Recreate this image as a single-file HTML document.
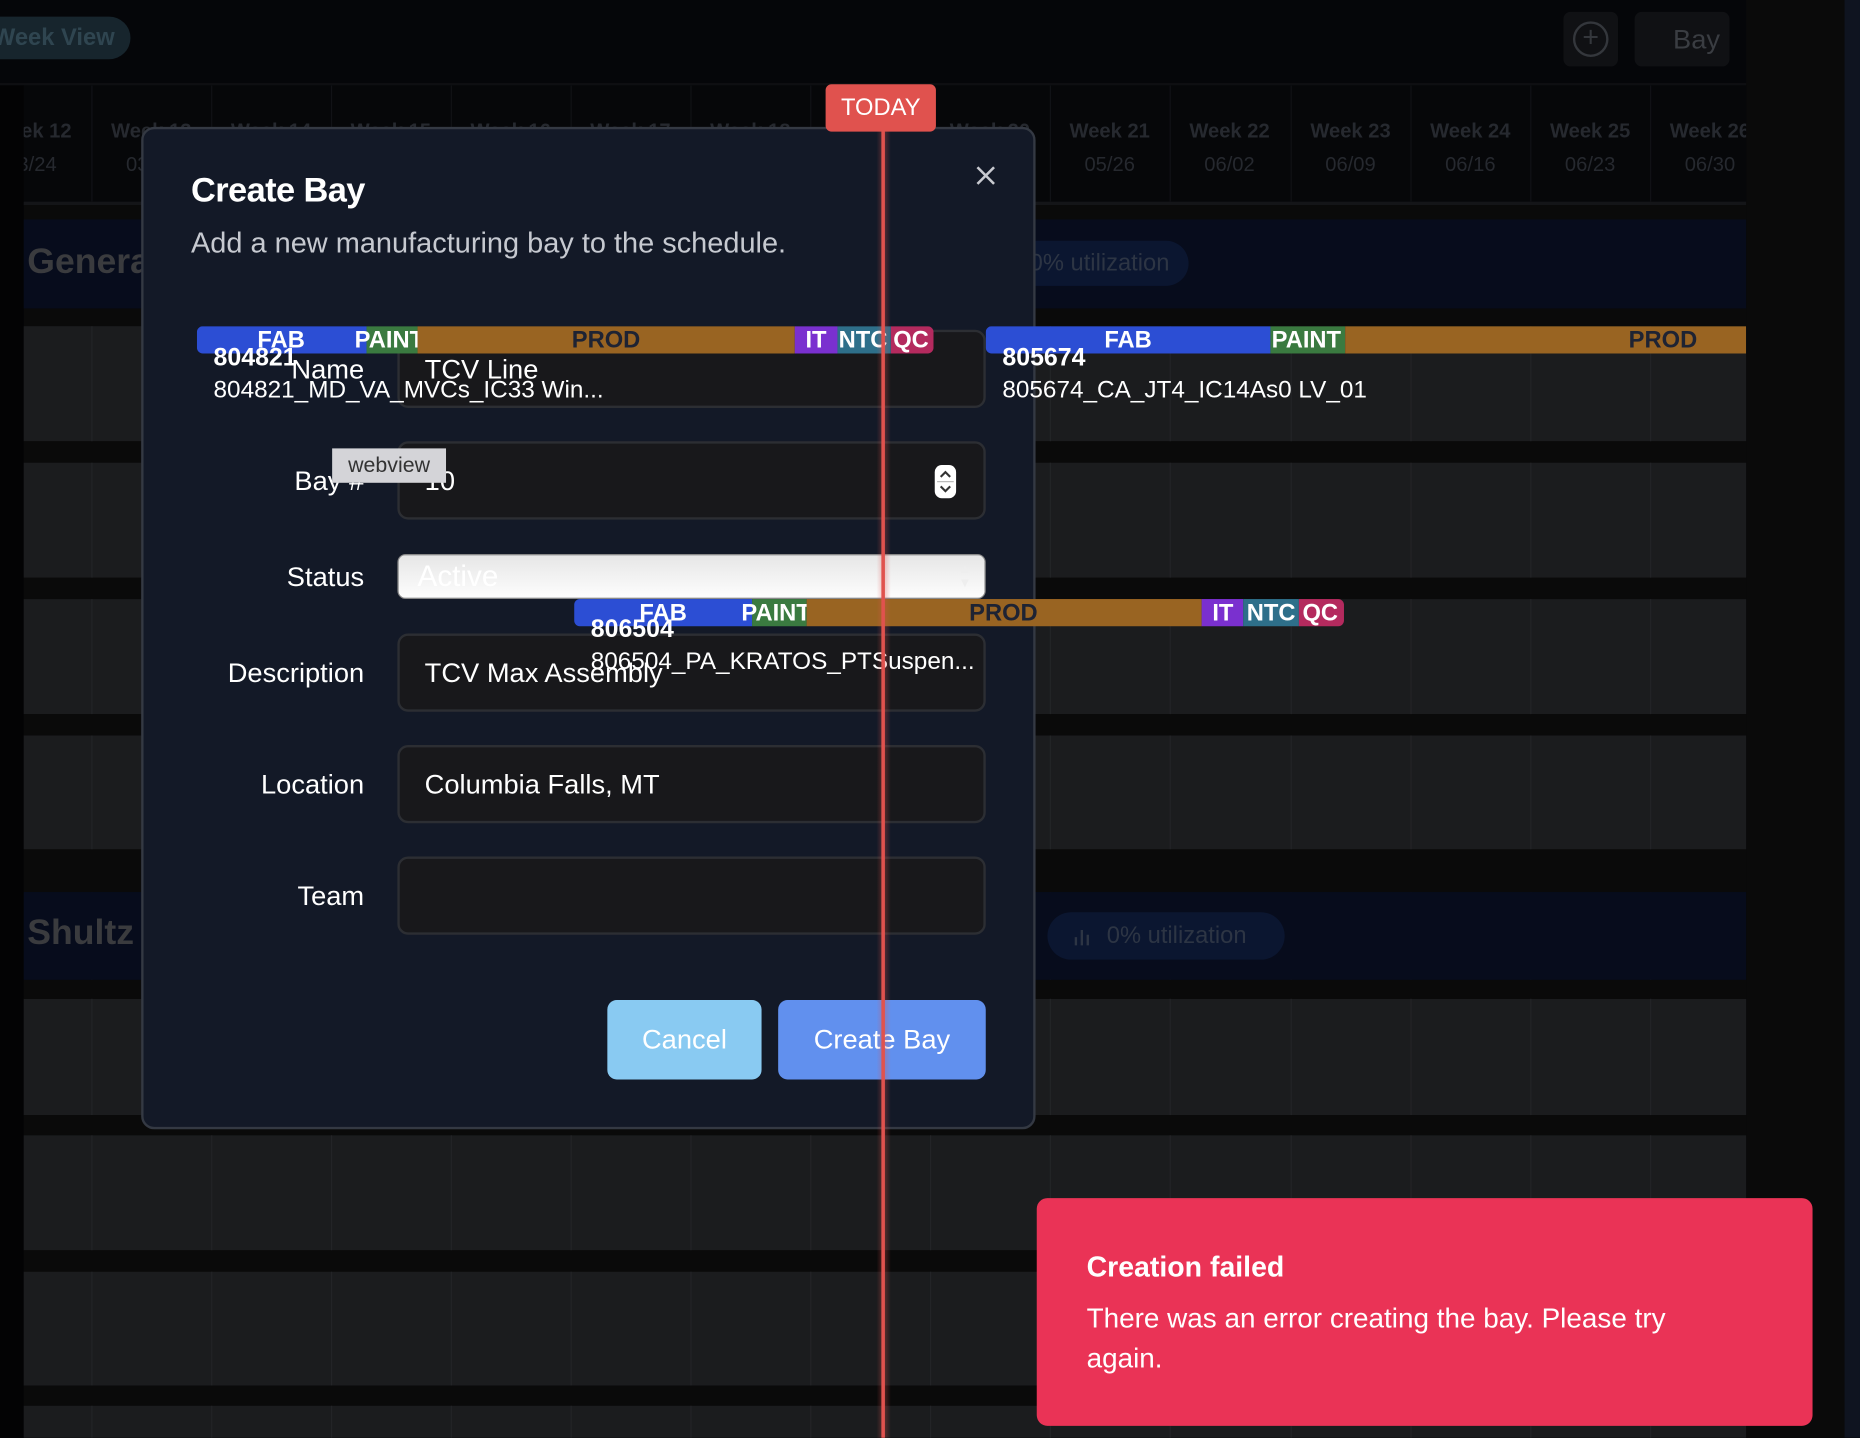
<!DOCTYPE html>
<html><head><meta charset="utf-8"><style>
*{box-sizing:border-box;margin:0;padding:0}
html,body{width:1860px;height:1438px;overflow:hidden;background:#050609;font-family:"Liberation Sans",sans-serif}
#s{position:absolute;left:0;top:0;width:1568px;height:1212px;transform:scale(1.18622);transform-origin:0 0;overflow:hidden;background:#050609}
.a{position:absolute}
.wk{position:absolute;top:100px;width:101px;text-align:center;color:#26292f;font-size:17px;font-weight:bold;line-height:22px}
.wk span{display:block;font-weight:normal;margin-top:6px}
.row{position:absolute;left:20px;width:1452px;background:#1b1c1e}
.vl{position:absolute;top:0;bottom:0;width:1px;background:#232427}
.lbl{position:absolute;right:1261px;color:#fff;font-size:23px;text-align:right}
.inp{position:absolute;left:335px;width:496px;height:66px;background:#18181b;border:2px solid #2c2e33;border-radius:9px;color:#fff;font-size:23px;padding-left:21px;line-height:62px}
.seg{position:absolute;top:0;height:23px}
.sl{position:absolute;font-size:20px;font-weight:bold;line-height:24px;color:#fff;white-space:nowrap}
.bt{position:absolute;color:#fff;font-weight:bold;font-size:21px;line-height:22px;white-space:nowrap}
.bs{position:absolute;color:#fff;font-size:20.5px;white-space:nowrap}
</style></head><body><div id="s">
<div class="a" style="left:1472px;top:0;width:96px;height:1212px;background:#0a0a0a"></div>
<div class="a" style="left:1555px;top:0;width:13px;height:1212px;background:#0f1420"></div>
<div class="a" style="left:-30px;top:14px;width:140px;height:36px;border-radius:18px;background:#17252d;color:#2f4550;font-size:20px;font-weight:bold;line-height:36px;padding-left:24px">Week View</div>
<div class="a" style="left:1318px;top:10px;width:46px;height:46px;border-radius:6px;background:#101114"></div>
<div class="a" style="left:1326px;top:18px;width:30px;height:30px;border-radius:50%;border:2.5px solid #34373c;color:#34373c;text-align:center;font-size:24px;line-height:24px">+</div>
<div class="a" style="left:1378px;top:10px;width:80px;height:46px;border-radius:6px;background:#101114;color:#3a3d42;font-size:23px;line-height:46px;text-align:right;padding-right:8px">Bay</div>
<div class="a" style="left:0;top:70px;width:1472px;height:2px;background:#0e0f12"></div>
<div class="a" style="left:0;top:72px;width:20px;height:1140px;background:#030304"></div>
<div class="a" style="left:20px;top:72px;width:1452px;height:98px;background:#060709"></div>
<div class="a" style="left:20px;top:170px;width:1452px;height:3px;background:#141518"></div>
<div class="a" style="left:20px;top:173px;width:1452px;height:1039px;background:#0a0a0a"></div>
<div class="a" style="left:20px;top:72px;width:1452px;height:98px;overflow:hidden">
<div class="vl" style="left:57px;background:#111216"></div><div class="vl" style="left:158px;background:#111216"></div><div class="vl" style="left:259px;background:#111216"></div><div class="vl" style="left:360px;background:#111216"></div><div class="vl" style="left:461px;background:#111216"></div><div class="vl" style="left:562px;background:#111216"></div><div class="vl" style="left:663px;background:#111216"></div><div class="vl" style="left:764px;background:#111216"></div><div class="vl" style="left:865px;background:#111216"></div><div class="vl" style="left:966px;background:#111216"></div><div class="vl" style="left:1068px;background:#111216"></div><div class="vl" style="left:1169px;background:#111216"></div><div class="vl" style="left:1270px;background:#111216"></div><div class="vl" style="left:1371px;background:#111216"></div>
<div class="wk" style="left:-44px;top:28px">Week 12<span>03/24</span></div>
<div class="wk" style="left:57px;top:28px">Week 13<span>03/31</span></div>
<div class="wk" style="left:158px;top:28px">Week 14<span>04/07</span></div>
<div class="wk" style="left:259px;top:28px">Week 15<span>04/14</span></div>
<div class="wk" style="left:360px;top:28px">Week 16<span>04/21</span></div>
<div class="wk" style="left:461px;top:28px">Week 17<span>04/28</span></div>
<div class="wk" style="left:562px;top:28px">Week 18<span>05/05</span></div>
<div class="wk" style="left:663px;top:28px">Week 19<span>05/12</span></div>
<div class="wk" style="left:764px;top:28px">Week 20<span>05/19</span></div>
<div class="wk" style="left:865px;top:28px">Week 21<span>05/26</span></div>
<div class="wk" style="left:966px;top:28px">Week 22<span>06/02</span></div>
<div class="wk" style="left:1068px;top:28px">Week 23<span>06/09</span></div>
<div class="wk" style="left:1169px;top:28px">Week 24<span>06/16</span></div>
<div class="wk" style="left:1270px;top:28px">Week 25<span>06/23</span></div>
<div class="wk" style="left:1371px;top:28px">Week 26<span>06/30</span></div>
</div>
<div class="row" style="top:275px;height:97px"></div>
<div class="row" style="top:390px;height:97px"></div>
<div class="row" style="top:505px;height:97px"></div>
<div class="row" style="top:620px;height:96px"></div>
<div class="row" style="top:842px;height:98px"></div>
<div class="row" style="top:957px;height:97px"></div>
<div class="row" style="top:1072px;height:96px"></div>
<div class="row" style="top:1185px;height:40px"></div>
<div class="a" style="left:20px;top:275px;width:1452px;height:940px">
<div class="vl" style="left:57px"></div><div class="vl" style="left:158px"></div><div class="vl" style="left:259px"></div><div class="vl" style="left:360px"></div><div class="vl" style="left:461px"></div><div class="vl" style="left:562px"></div><div class="vl" style="left:663px"></div><div class="vl" style="left:764px"></div><div class="vl" style="left:865px"></div><div class="vl" style="left:966px"></div><div class="vl" style="left:1068px"></div><div class="vl" style="left:1169px"></div><div class="vl" style="left:1270px"></div><div class="vl" style="left:1371px"></div>
</div>
<div class="a" style="left:20px;top:372px;width:1452px;height:18px;background:#0a0a0a"></div>
<div class="a" style="left:20px;top:487px;width:1452px;height:18px;background:#0a0a0a"></div>
<div class="a" style="left:20px;top:602px;width:1452px;height:18px;background:#0a0a0a"></div>
<div class="a" style="left:20px;top:716px;width:1452px;height:36px;background:#0a0a0a"></div>
<div class="a" style="left:20px;top:826px;width:1452px;height:16px;background:#0a0a0a"></div>
<div class="a" style="left:20px;top:940px;width:1452px;height:17px;background:#0a0a0a"></div>
<div class="a" style="left:20px;top:1054px;width:1452px;height:18px;background:#0a0a0a"></div>
<div class="a" style="left:20px;top:1168px;width:1452px;height:17px;background:#0a0a0a"></div>
<div class="a" style="left:20px;top:185px;width:1452px;height:75px;background:#070c1c"></div>
<div class="a" style="left:23px;top:204px;color:#3a3b3e;font-size:30px;font-weight:bold">General</div>
<div class="a" style="left:800px;top:203px;width:202px;height:38px;border-radius:19px;background:#0b1630;color:#2d3544;font-size:20px;line-height:38px;padding-left:68px">0% utilization</div>
<div class="a" style="left:20px;top:752px;width:1452px;height:74px;background:#070c1c"></div>
<div class="a" style="left:23px;top:770px;color:#3a3b3e;font-size:30px;font-weight:bold">Shultz</div>
<div class="a" style="left:883px;top:769px;width:200px;height:40px;border-radius:20px;background:#0b1630;color:#2d3544;font-size:20px;line-height:40px;padding-left:50px">0% utilization</div>
<svg class="a" style="left:905px;top:780px" width="18" height="18"><path d="M2 17V10M7 17V4M12 17V8" stroke="#2d3544" stroke-width="2"/></svg>
<div class="a" style="left:119px;top:107px;width:754px;height:845px;background:#131927;border:2px solid #343943;border-radius:11px"></div>
<div class="a" style="left:161px;top:145px;color:#fff;font-size:29px;font-weight:bold;letter-spacing:-0.5px">Create Bay</div>
<div class="a" style="left:161px;top:192px;color:#c6c9d0;font-size:24.4px">Add a new manufacturing bay to the schedule.</div>
<svg class="a" style="left:822px;top:139px" width="18" height="18"><path d="M2 2L16 16M16 2L2 16" stroke="#c8cad0" stroke-width="2.2"/></svg>
<div class="lbl" style="top:298px">Name</div>
<div class="inp" style="top:278px">TCV Line</div>
<div class="lbl" style="top:392px">Bay #</div>
<div class="inp" style="top:372px">10</div>
<svg class="a" style="left:787px;top:391px" width="20" height="30"><rect x="1" y="1" width="18" height="28" rx="6" fill="#fff"/><path d="M6 11L10 7L14 11M6 19L10 23L14 19" stroke="#333" stroke-width="1.8" fill="none"/><path d="M3 15H17" stroke="#bbb" stroke-width="1"/></svg>
<div class="lbl" style="top:473px">Status</div>
<div class="a" style="left:335px;top:467px;width:496px;height:38px;border-radius:7px;background:linear-gradient(#e6e6e6,#fdfdfd);border:1.5px solid #888;color:#fff;font-size:25px;line-height:36px;padding-left:16px">Active</div>
<div class="a" style="left:808px;top:474px;color:#eee;font-size:11px;line-height:12px">▲<br>▼</div>
<div class="lbl" style="top:554px">Description</div>
<div class="inp" style="top:534px">TCV Max Assembly</div>
<div class="lbl" style="top:648px">Location</div>
<div class="inp" style="top:628px">Columbia Falls, MT</div>
<div class="lbl" style="top:742px">Team</div>
<div class="inp" style="top:722px"></div>
<div class="a" style="left:512px;top:843px;width:130px;height:67px;border-radius:8px;background:#89caf2;color:#fff;font-size:23px;line-height:67px;text-align:center">Cancel</div>
<div class="a" style="left:656px;top:843px;width:175px;height:67px;border-radius:8px;background:#6190ee;color:#fff;font-size:23px;line-height:67px;text-align:center">Create Bay</div>
<div class="a" style="left:166px;top:275px;width:621px;height:23px;overflow:hidden;border-radius:5px">
<div class="seg" style="left:0;width:143px;background:#2c4ed4"></div>
<div class="seg" style="left:143px;width:43px;background:#3a7a40"></div>
<div class="seg" style="left:186px;width:318px;background:#996422"></div>
<div class="seg" style="left:504px;width:36px;background:#7a30cf"></div>
<div class="seg" style="left:540px;width:45px;background:#2e6f8a"></div>
<div class="seg" style="left:585px;width:36px;background:#b42a5e"></div>
<div class="sl" style="left:51px">FAB</div>
<div class="sl" style="left:133px;width:53px;overflow:hidden">PAINT</div>
<div class="sl" style="left:316px;color:#1e2333">PROD</div>
<div class="sl" style="left:513px">IT</div>
<div class="sl" style="left:541px">NTC</div>
<div class="sl" style="left:587px">QC</div>
</div>
<div class="bt" style="left:180px;top:291px">804821</div>
<div class="bs" style="left:180px;top:317px">804821_MD_VA_MVCs_IC33 Win...</div>
<div class="a" style="left:831px;top:275px;width:641px;height:23px;overflow:hidden;border-radius:5px 0 0 5px">
<div class="seg" style="left:0;width:240px;background:#2c4ed4"></div>
<div class="seg" style="left:240px;width:63px;background:#3a7a40"></div>
<div class="seg" style="left:303px;width:338px;background:#996422"></div>
<div class="sl" style="left:100px">FAB</div>
<div class="sl" style="left:241px">PAINT</div>
<div class="sl" style="left:542px;color:#1e2333">PROD</div>
</div>
<div class="bt" style="left:845px;top:291px">805674</div>
<div class="bs" style="left:845px;top:317px">805674_CA_JT4_IC14As0 LV_01</div>
<div class="a" style="left:484px;top:505px;width:649px;height:23px;overflow:hidden;border-radius:5px">
<div class="seg" style="left:0;width:150px;background:#2c4ed4"></div>
<div class="seg" style="left:150px;width:46px;background:#3a7a40"></div>
<div class="seg" style="left:196px;width:333px;background:#996422"></div>
<div class="seg" style="left:529px;width:35px;background:#7a30cf"></div>
<div class="seg" style="left:564px;width:47px;background:#2e6f8a"></div>
<div class="seg" style="left:611px;width:38px;background:#b42a5e"></div>
<div class="sl" style="left:55px">FAB</div>
<div class="sl" style="left:141px;width:55px;overflow:hidden">PAINT</div>
<div class="sl" style="left:333px;color:#1e2333">PROD</div>
<div class="sl" style="left:538px">IT</div>
<div class="sl" style="left:567px">NTC</div>
<div class="sl" style="left:614px">QC</div>
</div>
<div class="bt" style="left:498px;top:520px">806504</div>
<div class="bs" style="left:498px;top:546px">806504_PA_KRATOS_PTSuspen...</div>
<div class="a" style="left:280px;top:378px;width:96px;height:29px;background:#d4d4d8;color:#333;font-size:18px;line-height:29px;text-align:center">webview</div>
<div class="a" style="left:739px;top:108px;width:12px;height:1110px;background:linear-gradient(90deg,rgba(224,82,78,0),rgba(224,82,78,.35),rgba(224,82,78,0))"></div>
<div class="a" style="left:743px;top:108px;width:3px;height:1110px;background:#e0524e"></div>
<div class="a" style="left:696px;top:71px;width:93px;height:40px;border-radius:5px;background:#e0524e;color:#fff;font-size:20px;line-height:40px;text-align:center">TODAY</div>
<div class="a" style="left:874px;top:1010px;width:654px;height:192px;border-radius:9px;background:#ea3356"></div>
<div class="a" style="left:916px;top:1055px;color:#fff;font-size:24px;font-weight:bold">Creation failed</div>
<div class="a" style="left:916px;top:1094px;width:530px;color:#fff;font-size:23.5px;line-height:34px">There was an error creating the bay. Please try again.</div>
</div></body></html>
